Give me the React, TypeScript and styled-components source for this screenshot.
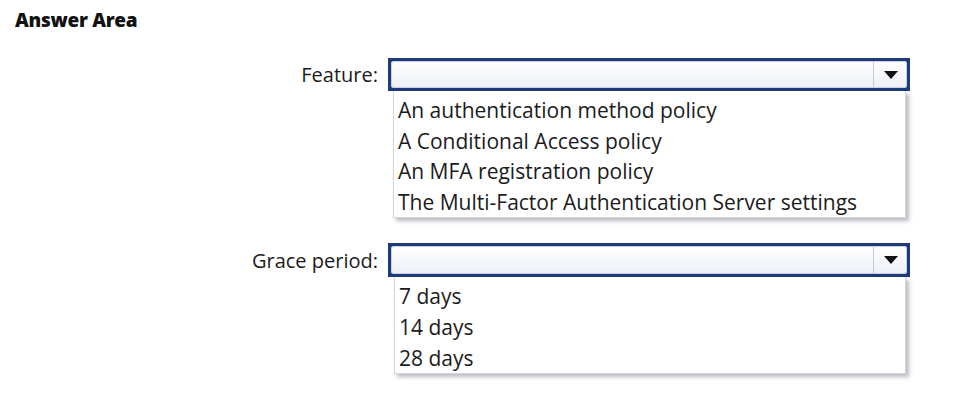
import React from "react";
import styled, { createGlobalStyle } from "styled-components";

const Global = createGlobalStyle`
  html, body { margin: 0; padding: 0; background: #ffffff; }
  body { font-family: "Open Sans", "Noto Sans", sans-serif; color: #1b1b1b; }
`;

const Page = styled.div`
  width: 956px;
  height: 412px;
  box-sizing: border-box;
  padding: 8px 0 0 15px;
  display: flex;
  flex-direction: column;
`;

const Title = styled.h1`
  margin: 0;
  font-family: "Open Sans", sans-serif;
  font-weight: 800;
  font-size: 19px;
  line-height: 24px;
  letter-spacing: -0.3px;
  color: #111;
`;

const Form = styled.div`
  display: flex;
  flex-direction: column;
  gap: 25px;
  margin-top: 26px;
`;

const Field = styled.div`
  display: grid;
  grid-template-columns: 363px 522px;
  column-gap: 10px;
  align-items: start;
`;

const Label = styled.div<{ $h: number }>`
  height: ${(p) => p.$h}px;
  display: flex;
  align-items: center;
  justify-content: flex-end;
  font-size: 20px;
  color: #1b1b1b;
`;

const Control = styled.div`
  display: flex;
  flex-direction: column;
`;

const Select = styled.div<{ $h: number }>`
  height: ${(p) => p.$h}px;
  box-sizing: border-box;
  border: 3px solid #1d3b7b;
  background: #1d3b7b;
  display: flex;
`;

const SelectInner = styled.div`
  flex: 1;
  display: flex;
  border-radius: 3px;
  background: linear-gradient(#ffffff, #eceff6);
  box-shadow: inset 0 0 0 1px #c9cfdc;
`;

const SelectValue = styled.div`
  flex: 1;
`;

const ArrowCell = styled.div`
  width: 33px;
  border-left: 1px solid #c8ccd4;
  display: flex;
  align-items: center;
  justify-content: center;
`;

const List = styled.ul<{ $ml: number }>`
  list-style: none;
  margin: 0 4px 0 ${(p) => p.$ml}px;
  padding: 4px 0 0 4px;
  background: #ffffff;
  border: 1px solid #d4d6db;
  border-top: none;
  box-shadow: 3px 3px 4px rgba(60, 60, 80, 0.35);
`;

const Item = styled.li`
  font-size: 21px;
  line-height: 30.6px;
  white-space: nowrap;
  color: #1b1b1b;
`;

const Arrow = () => (
  <svg width="14" height="8" viewBox="0 0 14 8">
    <polygon points="0,0 14,0 7,8" fill="#111" />
  </svg>
);

type DropProps = { label: string; h: number; ml: number; options: string[] };

const Dropdown = ({ label, h, ml, options }: DropProps) => (
  <Field>
    <Label $h={h}>{label}</Label>
    <Control>
      <Select $h={h}>
        <SelectInner>
          <SelectValue />
          <ArrowCell>
            <Arrow />
          </ArrowCell>
        </SelectInner>
      </Select>
      <List $ml={ml}>
        {options.map((o) => (
          <Item key={o}>{o}</Item>
        ))}
      </List>
    </Control>
  </Field>
);

export default function App() {
  return (
    <Page>
      <Global />
      <Title>Answer Area</Title>
      <Form>
        <Dropdown
          label="Feature:"
          h={33}
          ml={5}
          options={[
            "An authentication method policy",
            "A Conditional Access policy",
            "An MFA registration policy",
            "The Multi-Factor Authentication Server settings",
          ]}
        />
        <Dropdown
          label="Grace period:"
          h={34}
          ml={6}
          options={["7 days", "14 days", "28 days"]}
        />
      </Form>
    </Page>
  );
}
